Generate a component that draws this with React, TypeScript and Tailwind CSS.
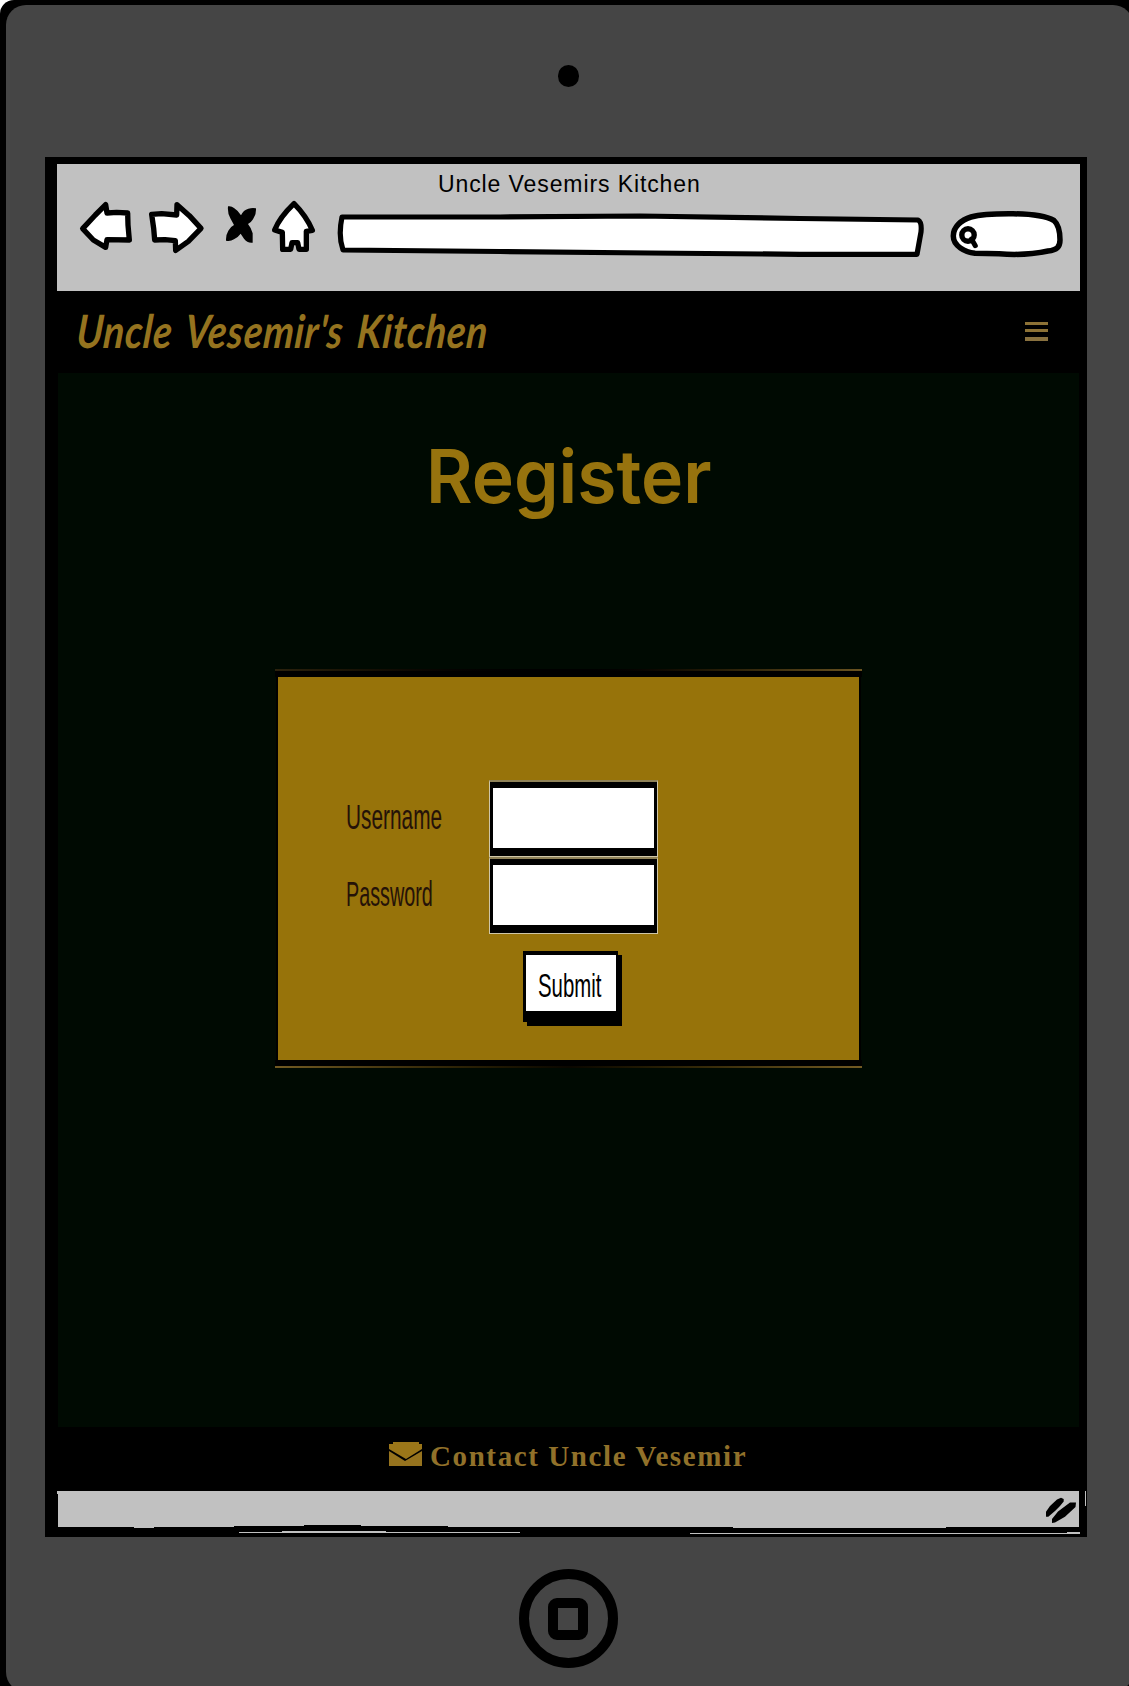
function BackIcon() {
  return (
    <svg viewBox="105 150 195 165" className="h-[55px] w-[65px] shrink-0">
      <path d="M128 236L166 195L197 164L201 189L230 187L263 189L264 225L268 270L201 269L197 292L160 270Z" fill="#fff" stroke="#000" strokeWidth="16" strokeLinejoin="round" />
    </svg>
  );
}

function ForwardIcon() {
  return (
    <svg viewBox="300 150 210 165" className="h-[55px] w-[70px] shrink-0">
      <path d="M335 193L365 191L410 195L411 164L448 197L483 235L445 274L407 301L406 272L375 269L344 270L341 235Z" fill="#fff" stroke="#000" strokeWidth="16" strokeLinejoin="round" />
    </svg>
  );
}

function StopIcon() {
  return (
    <svg viewBox="510 150 165 165" className="h-[55px] w-[55px] shrink-0">
      <path d="M564 169Q574 167 583 175Q594 182 603 196Q610 180 625 176Q638 172 648 175Q649 193 639 208Q634 217 624 222Q634 234 638 250L638 278Q622 280 612 266L602 251Q593 263 582 268Q570 276 558 272Q557 255 565 242Q570 231 582 225L571 205Q562 190 564 169Z" fill="#000" />
    </svg>
  );
}

function HomeIcon() {
  return (
    <svg viewBox="675 150 165 165" className="h-[55px] w-[55px] shrink-0">
      <path d="M762 161Q799 198 817 241L799 244L799 298L777 298L773 278L756 278L752 298L728 298L727 247L704 240Q719 202 762 161Z" fill="#fff" stroke="#000" strokeWidth="16" strokeLinejoin="round" />
      <path d="M764 288V307" stroke="#c0c0c0" strokeWidth="3" />
    </svg>
  );
}

function AddressBar() {
  return (
    <svg viewBox="320 200 610 64" className="h-[64px] w-[610px] shrink-0">
      <path d="M342 217L500 217L640 216L800 218.5L918 220Q922 222 921 232L917 254.3L800 254.3L650 253L500 251.5L343 250Q338 236 342 217Z" fill="#fff" stroke="#000" strokeWidth="5.2" strokeLinejoin="round" />
    </svg>
  );
}

function SearchBox() {
  return (
    <svg viewBox="930 200 149 64" className="h-[64px] w-[149px] shrink-0">
      <path d="M953.3 236C953.3 227 961 220 971 217C984 213.5 997 213.8 1013 213.8C1030 214 1046 216 1054 220.5C1059 225 1060 233 1060 240C1060 247 1057 250 1048 251C1032 254.5 1015 255 999 253.8L975 253.3C965 252 953.3 246 953.3 236Z" fill="#fff" stroke="#000" strokeWidth="5.5" />
      <circle cx="968" cy="235" r="6.2" fill="#fff" stroke="#000" strokeWidth="5.4" />
      <path d="M971.5 239L975.3 245.7" stroke="#000" strokeWidth="5" strokeLinecap="round" />
    </svg>
  );
}

function BrowserChrome() {
  return (
    <header className="ml-3 h-[127px] w-[1022.5px] bg-[#c1c1c1]">
      <h2 className="h-9 pl-[381px] font-['Liberation_Sans'] text-[23px] leading-[40px] tracking-[0.9px] whitespace-nowrap text-black">
        Uncle Vesemirs Kitchen
      </h2>
      <div className="flex pl-[18px]">
        <BackIcon />
        <ForwardIcon />
        <StopIcon />
        <HomeIcon />
        <AddressBar />
        <SearchBox />
      </div>
    </header>
  );
}

function SiteNav() {
  return (
    <nav className="flex h-[82px] items-start justify-between pr-[39px] pl-8">
      <div className="mt-[10px] h-[60px] w-[430px]">
        <div className="origin-left -skew-x-6 scale-x-[0.84] font-['Lato'] text-[46px] leading-[60px] font-bold tracking-[0.8px] [word-spacing:5.5px] whitespace-nowrap text-[#95731f] italic">
          Uncle Vesemir's Kitchen
        </div>
      </div>
      <button aria-label="Menu" className="mt-[31px] flex w-[23px] flex-col">
        <span className="h-[3px] w-full bg-[#8d7236]" />
        <span className="mt-1 h-[3px] w-full bg-[#8d7236]" />
        <span className="mt-[5px] h-1 w-full bg-[#89713f]" />
      </button>
    </nav>
  );
}

const labelClass = "h-[77px] origin-left pt-3 font-['Liberation_Sans'] text-[35px] leading-[50px] whitespace-nowrap text-[#251208]";

function FieldBox({ name, type }: { name: string; type: string }) {
  return (
    <div className="h-[77px] border border-t-2 border-[#cfc6a7] border-t-[#8f8258] bg-black px-[3px] pt-[6px]">
      <input aria-label={name} type={type} className="block h-[60px] w-full bg-white outline-none" />
    </div>
  );
}

function RegisterForm() {
  return (
    <form className="mx-auto h-[399px] w-[587px]">
      <div className="h-[2px] w-full bg-linear-to-r from-[#2c220d] via-black to-[#6b5421]" />
      <div className="h-[4px] bg-black" />
      <div className="h-[2px] bg-linear-to-r from-black via-[#392804] to-black" />
      <div className="mx-[3px] flex h-[383px] bg-[#97730a] shadow-[0_0_0_2px_#000]">
        <div className="w-[211px] pt-[103px] pl-[68px]">
          <div className={`${labelClass} scale-x-[0.595]`}>Username</div>
          <div className={`${labelClass} scale-x-[0.565]`}>Password</div>
        </div>
        <div className="w-[169px] pt-[103px]">
          <FieldBox name="Username" type="text" />
          <FieldBox name="Password" type="password" />
          <button type="button" className="mt-[17px] ml-[34px] block h-[71px] w-[95px] border-t-4 border-r-2 border-b-[11px] border-l-[3px] border-black bg-white shadow-[4px_4px_0_#000]">
            <span className="mt-[3px] ml-[12px] block w-[62px] origin-left scale-x-[0.6] text-left font-['Liberation_Sans'] text-[34px] leading-[50px] whitespace-nowrap text-black">Submit</span>
          </button>
        </div>
      </div>
      <div className="h-[6px] bg-black" />
      <div className="h-[2px] bg-linear-to-r from-[#735b23] via-[#0a0700] to-[#735b23]" />
    </form>
  );
}

function EnvelopeIcon() {
  return (
    <svg viewBox="0 0 33 24" className="mt-[15px] h-6 w-[33px]">
      <path d="M4 0H30V2H33V7L17 17L0 7V2H4Z" fill="#9b7619" />
      <path d="M0 9L16 19L33 9V24H0Z" fill="#96731e" />
    </svg>
  );
}

function StatusBar() {
  return (
    <svg viewBox="57 1491 1030 46" className="ml-3 block h-[46px] w-[1030px]">
      <path d="M57 1491H1079V1527H946V1528H733V1527H448V1526H361V1525H304V1526H234V1527H154V1528H134V1527H58V1494H57Z" fill="#c1c1c1" />
      <path d="M239 1532.5H282M386 1532.5H520M690 1533.5H1067" stroke="#c1c1c1" />
      <path d="M282 1532H386M1067 1533H1080" stroke="#c1c1c1" strokeWidth="2" />
      <path d="M1085.5 1491V1506" stroke="#c1c1c1" />
      <path d="M1046 1516.7V1511.7L1050 1506L1057 1499.5L1061 1497.7L1063.7 1499V1501.5L1060 1506L1055 1511L1048.3 1516.7ZM1052 1523V1519L1058 1511.5L1070 1502.5L1076 1502.5L1075.5 1507L1065 1516.7L1055 1522.5Z" fill="#000" />
    </svg>
  );
}

export default function App() {
  return (
    <div className="h-[1686px] w-[1129px] overflow-hidden bg-white">
      <div className="h-[1700px] w-[1150px] rounded-tl-[14px] bg-black pt-[5px] pl-[6px]">
        <div className="h-[1687px] w-[1127px] rounded-[20px] bg-[#454545]">
          <div className="flex h-[152px] pt-[60px] pl-[552px]">
            <div className="h-[22px] w-[21px] rounded-full bg-black" />
          </div>
          <div className="ml-[39px] h-[1380px] w-[1042px] bg-black pt-[7px]">
            <BrowserChrome />
            <SiteNav />
            <main className="ml-[13px] h-[1054px] w-[1021px] bg-[#000a02] pt-[66px]">
              <h1 className="h-[230px] pl-[368px] font-['Inter'] text-[74px] leading-[75px] font-semibold whitespace-nowrap text-[#97730e]">
                <span className="inline-block origin-left scale-x-[0.965]">Register</span>
              </h1>
              <RegisterForm />
            </main>
            <footer className="flex h-16 pl-[344px]">
              <EnvelopeIcon />
              <a className="ml-[8px] pt-3 font-['Liberation_Serif'] text-[29px] leading-[34px] font-bold tracking-[1.6px] whitespace-nowrap text-[#91712a]">
                Contact Uncle Vesemir
              </a>
            </footer>
            <StatusBar />
          </div>
          <div className="flex pt-8 pl-[513px]">
            <button aria-label="Home" className="flex h-[99px] w-[99px] items-center justify-center rounded-full border-[10px] border-black">
              <span className="mr-px h-[42px] w-10 rounded-[9px] border-10 border-black" />
            </button>
          </div>
        </div>
      </div>
    </div>
  );
}
